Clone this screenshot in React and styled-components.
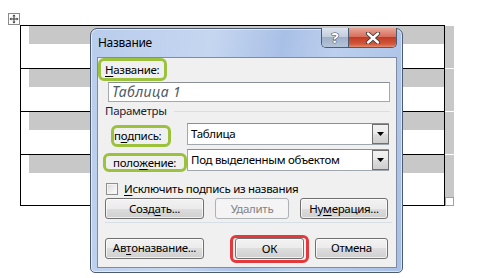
import React from "react";
import styled, { createGlobalStyle } from "styled-components";

const GlobalStyle = createGlobalStyle`
  html, body {
    margin: 0;
    padding: 0;
    background: #ffffff;
  }
  body {
    font-family: "Noto Sans", "Open Sans", sans-serif;
    font-size: 11.5px;
    letter-spacing: -0.3px;
    color: #000;
  }
`;

const rows = [0, 1, 2, 3];

const Arrow = () => (
  <svg width="7" height="4" viewBox="0 0 7 4">
    <path d="M0 0 H7 L3.5 4 Z" fill="#000" />
  </svg>
);

const App = () => {
  return (
    <>
      <GlobalStyle />
      <Page>
        <MoveHandle>
          <svg width="10" height="10" viewBox="0 0 10 10">
            <path
              d="M5 0.5 L6.6 2.3 H5.5 V4.5 H7.7 V3.4 L9.5 5 L7.7 6.6 V5.5 H5.5 V7.7 H6.6 L5 9.5 L3.4 7.7 H4.5 V5.5 H2.3 V6.6 L0.5 5 L2.3 3.4 V4.5 H4.5 V2.3 H3.4 Z"
              fill="#333"
            />
          </svg>
        </MoveHandle>
        <TableRow>
          <Table>
            {rows.map((r) => (
              <Row key={r}>
                <Band />
              </Row>
            ))}
          </Table>
          <EndCol>
            {rows.map((r) => (
              <EndMark key={r} />
            ))}
            <ResizeBox />
          </EndCol>
        </TableRow>

        <Dialog>
          <TitleBar>
            <TitleText>Название</TitleText>
            <CaptionButtons>
              <HelpBtn>?</HelpBtn>
              <CloseBtn>
                <svg width="16" height="12" viewBox="0 0 16 12">
                  <path
                    d="M3 1.5 L13 10.5 M13 1.5 L3 10.5"
                    stroke="#3a3a3a"
                    strokeWidth="4.2"
                    strokeLinecap="round"
                  />
                  <path
                    d="M3 1.5 L13 10.5 M13 1.5 L3 10.5"
                    stroke="#ffffff"
                    strokeWidth="2.4"
                    strokeLinecap="round"
                  />
                </svg>
              </CloseBtn>
            </CaptionButtons>
          </TitleBar>

          <Client>
            <Mark $w={69} $h={23} $pl={4} $ml={0} $mt={0}>
              <u>Н</u>азвание:
            </Mark>
            <NameField>Таблица 1</NameField>

            <GroupHeader>
              <span>Параметры</span>
              <GroupLine />
            </GroupHeader>

            <FieldRow $mt={4}>
              <LabelCell>
                <Mark $w={60} $h={22} $pl={0} $ml={13} $mt={2}>
                  п<u>о</u>дпись:
                </Mark>
              </LabelCell>
              <Combo>
                <ComboText>Таблица</ComboText>
                <ComboArrow>
                  <Arrow />
                </ComboArrow>
              </Combo>
            </FieldRow>

            <FieldRow $mt={4}>
              <LabelCell>
                <Mark $w={84} $h={19} $pl={7} $ml={5} $mt={4}>
                  поло<u>ж</u>ение:
                </Mark>
              </LabelCell>
              <Combo>
                <ComboText>Под выделенным объектом</ComboText>
                <ComboArrow>
                  <Arrow />
                </ComboArrow>
              </Combo>
            </FieldRow>

            <CheckRow>
              <CheckBox />
              <span>
                <u>И</u>сключить подпись из названия
              </span>
            </CheckRow>

            <ButtonRow $mt={2}>
              <Button $w={99}>
                Созд<u>а</u>ть...
              </Button>
              <Button $w={74} $ml={11} $disabled>
                Удалить
              </Button>
              <Button $w={88} $ml={11}>
                Ну<u>м</u>ерация...
              </Button>
            </ButtonRow>

            <Separator />

            <ButtonRow $mt={13}>
              <Button $w={99}>
                Ав<u>т</u>оназвание...
              </Button>
              <OkRing>
                <Button $w={69}>ОК</Button>
              </OkRing>
              <Button $w={73} $ml={6}>
                Отмена
              </Button>
            </ButtonRow>
          </Client>
        </Dialog>
      </Page>
    </>
  );
};

export default App;

const Page = styled.div`
  position: relative;
  width: 481px;
  height: 278px;
  overflow: hidden;
  padding: 13px 0 0 8px;
  box-sizing: border-box;
`;

const MoveHandle = styled.div`
  width: 12px;
  height: 12px;
  box-sizing: border-box;
  border: 1px solid #8a8a8a;
  background: #fff;
  display: flex;
  align-items: center;
  justify-content: center;
`;

const TableRow = styled.div`
  display: flex;
  margin-left: 12px;
`;

const Table = styled.div`
  width: 425px;
  box-sizing: border-box;
  border: 1px solid #000;
  border-top: none;
  background-image: repeating-linear-gradient(
    to right,
    transparent 0 84px,
    #000 84px 85px
  );
`;

const Row = styled.div`
  height: 43px;
  box-sizing: border-box;
  border-top: 1px solid #000;
  padding-left: 8px;
`;

const Band = styled.div`
  height: 18px;
  background: #c8c8c8;
`;

const EndCol = styled.div`
  display: flex;
  flex-direction: column;
  width: 9px;
`;

const EndMark = styled.div`
  height: 42px;
  margin-top: 1px;
  background: #c8c8c8;
`;

const ResizeBox = styled.div`
  width: 9px;
  height: 9px;
  box-sizing: border-box;
  border: 1px solid #a0a0a0;
  background: #fff;
`;

const Dialog = styled.div`
  position: absolute;
  left: 90px;
  top: 28px;
  width: 313px;
  height: 245px;
  box-sizing: border-box;
  display: flex;
  flex-direction: column;
  padding: 0 5px 4px 6px;
  border: 1px solid #4b5b72;
  border-radius: 7px 7px 5px 5px;
  background: linear-gradient(
    100deg,
    #b9cdec 0%,
    #c5d6f0 35%,
    #a9c0e6 55%,
    #bccfee 70%,
    #a8bfe5 100%
  );
  box-shadow: inset 0 0 0 1px rgba(255, 255, 255, 0.55);
`;

const TitleBar = styled.div`
  height: 28px;
  display: flex;
  justify-content: space-between;
  align-items: flex-start;
  flex-shrink: 0;
`;

const TitleText = styled.div`
  padding-left: 1px;
  margin-top: 6px;
  line-height: 16px;
  font-size: 12px;
  color: #000;
`;

const CaptionButtons = styled.div`
  display: flex;
  margin-top: -1px;
  height: 20px;
  border: 1px solid #4b5b72;
  border-top: none;
  border-radius: 0 0 5px 5px;
  overflow: hidden;
  box-sizing: border-box;
`;

const HelpBtn = styled.div`
  width: 26px;
  display: flex;
  align-items: center;
  justify-content: center;
  border-right: 1px solid #4b5b72;
  background: linear-gradient(
    180deg,
    #dbe3ee 0%,
    #c3cfdf 45%,
    #9fb0c8 50%,
    #b4c3d8 100%
  );
  color: #fff;
  font-weight: bold;
  font-size: 15px;
  line-height: 1;
  -webkit-text-stroke: 1px #3a3f4a;
  paint-order: stroke fill;
`;

const CloseBtn = styled.div`
  width: 47px;
  display: flex;
  align-items: center;
  justify-content: center;
  background: linear-gradient(
    180deg,
    #e9a696 0%,
    #d7715d 45%,
    #c23c24 50%,
    #d2593e 85%,
    #e28c6e 100%
  );
`;

const Client = styled.div`
  flex: 1;
  background: #f0f0f0;
  border: 1px solid #7e8ca2;
  display: flex;
  flex-direction: column;
  align-items: flex-start;
`;

const Mark = styled.div`
  width: ${(p) => p.$w}px;
  height: ${(p) => p.$h}px;
  margin-left: ${(p) => p.$ml}px;
  margin-top: ${(p) => p.$mt}px;
  padding-left: ${(p) => p.$pl}px;
  box-sizing: border-box;
  border: 3px solid #9cc23d;
  border-radius: 6px;
  display: flex;
  align-items: center;
  white-space: nowrap;
  line-height: 1;

  u {
    text-decoration-thickness: 1px;
    text-underline-offset: 2px;
  }
`;

const NameField = styled.div`
  margin: 1px 0 0 10px;
  width: 282px;
  height: 20px;
  box-sizing: border-box;
  border: 1px solid #a2a8b0;
  border-top-color: #8a8f96;
  background: #fff;
  padding-left: 3px;
  font-style: italic;
  font-size: 14px;
  line-height: 18px;
  color: #4f5965;
  letter-spacing: 0.4px;
`;

const GroupHeader = styled.div`
  display: flex;
  align-items: center;
  width: 285px;
  margin: 1px 0 0 7px;
  line-height: 16px;
  color: #1c2433;
`;

const GroupLine = styled.div`
  flex: 1;
  height: 1px;
  margin-left: 7px;
  background: #d5dfe5;
`;

const FieldRow = styled.div`
  display: flex;
  align-items: flex-start;
  margin-top: ${(p) => p.$mt}px;
`;

const LabelCell = styled.div`
  width: 89px;
  height: 22px;
`;

const Combo = styled.div`
  width: 202px;
  height: 22px;
  box-sizing: border-box;
  border: 1px solid #a2a8b0;
  border-top-color: #8a8f96;
  background: #fff;
  display: flex;
  align-items: center;
  justify-content: space-between;
  padding: 0 0 0 3px;
`;

const ComboText = styled.span`
  line-height: 16px;
`;

const ComboArrow = styled.div`
  width: 17px;
  height: 20px;
  box-sizing: border-box;
  border: 1px solid #707070;
  margin-right: -1px;
  background: linear-gradient(180deg, #f2f2f2 0%, #ebebeb 50%, #dddddd 50%, #cfcfcf 100%);
  display: flex;
  align-items: center;
  justify-content: center;
`;

const CheckRow = styled.div`
  display: flex;
  align-items: center;
  margin: 10px 0 0 8px;
  height: 15px;
  line-height: 15px;
  gap: 6px;

  u {
    text-underline-offset: 2px;
  }
`;

const CheckBox = styled.div`
  width: 12px;
  height: 12px;
  box-sizing: border-box;
  border: 1px solid #8e8f8f;
  background: linear-gradient(135deg, #d9d9d9 0%, #f4f4f4 70%, #ffffff 100%);
  box-shadow: inset 0 0 0 1px #f4f4f4;
`;

const ButtonRow = styled.div`
  display: flex;
  align-items: center;
  margin: ${(p) => p.$mt}px 0 0 7px;
`;

const Button = styled.div`
  width: ${(p) => p.$w}px;
  height: 21px;
  margin-left: ${(p) => p.$ml || 0}px;
  box-sizing: border-box;
  border: 1px solid ${(p) => (p.$disabled ? "#adb2b5" : "#707070")};
  border-radius: 3px;
  background: ${(p) =>
    p.$disabled
      ? "#f4f4f4"
      : "linear-gradient(180deg, #f2f2f2 0%, #ebebeb 50%, #dddddd 50%, #cfcfcf 100%)"};
  box-shadow: inset 0 0 0 1px ${(p) => (p.$disabled ? "#f4f4f4" : "rgba(255,255,255,0.7)")};
  color: ${(p) => (p.$disabled ? "#838383" : "#000")};
  display: flex;
  align-items: center;
  justify-content: center;
  line-height: 16px;

  u {
    text-underline-offset: 2px;
  }
`;

const Separator = styled.div`
  width: 287px;
  height: 1px;
  margin: 3px 0 0 7px;
  background: #d5dfe5;
`;

const OkRing = styled.div`
  margin: -1px 0 -3px 26px;
  padding: 0 2px 1px 2px;
  border: 3px solid #e3393c;
  border-radius: 6px;
  display: flex;
`;
